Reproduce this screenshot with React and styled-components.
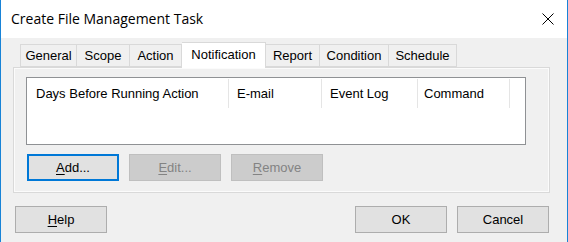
import React from "react";
import styled, { createGlobalStyle } from "styled-components";

const GlobalStyle = createGlobalStyle`
  html, body {
    margin: 0;
    padding: 0;
    background: #f0f0f0;
  }
  * {
    box-sizing: border-box;
  }
`;

const TABS = [
  { label: "General", width: 57 },
  { label: "Scope", width: 53 },
  { label: "Action", width: 52 },
  { label: "Notification", width: 84, active: true },
  { label: "Report", width: 54 },
  { label: "Condition", width: 69 },
  { label: "Schedule", width: 68 },
];

const COLUMNS = [
  { label: "Days Before Running Action", width: 202, pad: 9 },
  { label: "E-mail", width: 93, pad: 8 },
  { label: "Event Log", width: 96, pad: 8 },
  { label: "Command", width: 92, pad: 6 },
];

function App() {
  return (
    <>
      <GlobalStyle />
      <Window>
        <TitleBar>
          <Title>Create File Management Task</Title>
          <CloseButton>
            <svg width="12" height="12" viewBox="0 0 12 12">
              <path d="M0.5 0.5 L11.5 11.5 M11.5 0.5 L0.5 11.5" stroke="#000" strokeWidth="1" fill="none" />
            </svg>
          </CloseButton>
        </TitleBar>
        <Body>
          <TabStrip>
            {TABS.map((t) => (
              <Tab key={t.label} $width={t.width} $active={t.active}>
                {t.label}
              </Tab>
            ))}
          </TabStrip>
          <Panel>
            <ListView>
              <HeaderRow>
                {COLUMNS.map((c) => (
                  <HeaderCell key={c.label} $width={c.width} $pad={c.pad}>
                    {c.label}
                  </HeaderCell>
                ))}
              </HeaderRow>
            </ListView>
            <PanelButtons>
              <Button $focused>
                <u>A</u>dd...
              </Button>
              <Button disabled>
                <u>E</u>dit...
              </Button>
              <Button disabled>
                <u>R</u>emove
              </Button>
            </PanelButtons>
          </Panel>
        </Body>
        <Footer>
          <Button>
            <u>H</u>elp
          </Button>
          <FooterRight>
            <Button>OK</Button>
            <Button>Cancel</Button>
          </FooterRight>
        </Footer>
      </Window>
    </>
  );
}

const Window = styled.div`
  width: 568px;
  height: 242px;
  display: flex;
  flex-direction: column;
  background: #f0f0f0;
  border-left: 1px solid #1883d7;
  border-right: 1px solid #1883d7;
  font-family: "Liberation Sans", Arial, sans-serif;
  font-size: 13px;
  color: #000;
  overflow: hidden;
`;

const TitleBar = styled.div`
  height: 38px;
  flex: none;
  display: flex;
  align-items: center;
  justify-content: space-between;
  background: #fff;
  padding: 0 13px 0 10px;
`;

const Title = styled.div`
  font-family: "Open Sans", "Noto Sans", sans-serif;
  font-size: 14px;
  padding-bottom: 2px;
`;

const CloseButton = styled.div`
  width: 12px;
  height: 12px;
  display: flex;
  svg {
    display: block;
  }
`;

const Body = styled.div`
  margin: 4px 17px 0 12px;
  display: flex;
  flex-direction: column;
`;

const TabStrip = styled.div`
  display: flex;
  align-items: flex-end;
  height: 25px;
  padding-left: 7px;
`;

const Tab = styled.div`
  position: relative;
  width: ${(p) => p.$width}px;
  height: ${(p) => (p.$active ? 26 : 23)}px;
  margin-bottom: ${(p) => (p.$active ? -1 : 0)}px;
  z-index: ${(p) => (p.$active ? 1 : 0)};
  display: flex;
  align-items: center;
  justify-content: center;
  padding-bottom: ${(p) => (p.$active ? 2 : 0)}px;
  background: ${(p) => (p.$active ? "#fff" : "#f0f0f0")};
  border: 1px solid #d9d9d9;
  border-bottom: ${(p) => (p.$active ? "none" : "1px solid #d9d9d9")};
  & + & {
    border-left: ${(p) => (p.$active ? "1px solid #d9d9d9" : "none")};
  }
  white-space: nowrap;
`;

const Panel = styled.div`
  height: 126px;
  border: 1px solid #d9d9d9;
  box-shadow: inset 0 0 0 1px #fbfbfb;
  padding: 9px 0 0 12px;
  display: flex;
  flex-direction: column;
`;

const ListView = styled.div`
  width: 500px;
  height: 68px;
  background: #fff;
  border: 1px solid #8f9194;
`;

const HeaderRow = styled.div`
  display: flex;
  height: 30px;
`;

const HeaderCell = styled.div`
  width: ${(p) => p.$width}px;
  padding-left: ${(p) => p.$pad}px;
  display: flex;
  align-items: center;
  border-right: 1px solid #e5e5e5;
  margin: 1px 0 0;
  white-space: nowrap;
`;

const PanelButtons = styled.div`
  display: flex;
  gap: 10px;
  margin: 9px 0 0 1px;
`;

const Button = styled.button`
  width: 92px;
  height: 27px;
  padding: 0;
  font-family: "Liberation Sans", Arial, sans-serif;
  font-size: 13px;
  background: ${(p) => (p.disabled ? "#cccccc" : "#e1e1e1")};
  color: ${(p) => (p.disabled ? "#838383" : "#000")};
  border: ${(p) =>
    p.$focused ? "2px solid #0078d7" : p.disabled ? "1px solid #bfbfbf" : "1px solid #adadad"};
  display: flex;
  align-items: center;
  justify-content: center;
  u {
    text-decoration-thickness: 1px;
    text-underline-offset: 2px;
  }
`;

const Footer = styled.div`
  display: flex;
  justify-content: space-between;
  margin-top: 13px;
  padding: 0 18px 0 14px;
`;

const FooterRight = styled.div`
  display: flex;
  gap: 10px;
`;

export default App;
